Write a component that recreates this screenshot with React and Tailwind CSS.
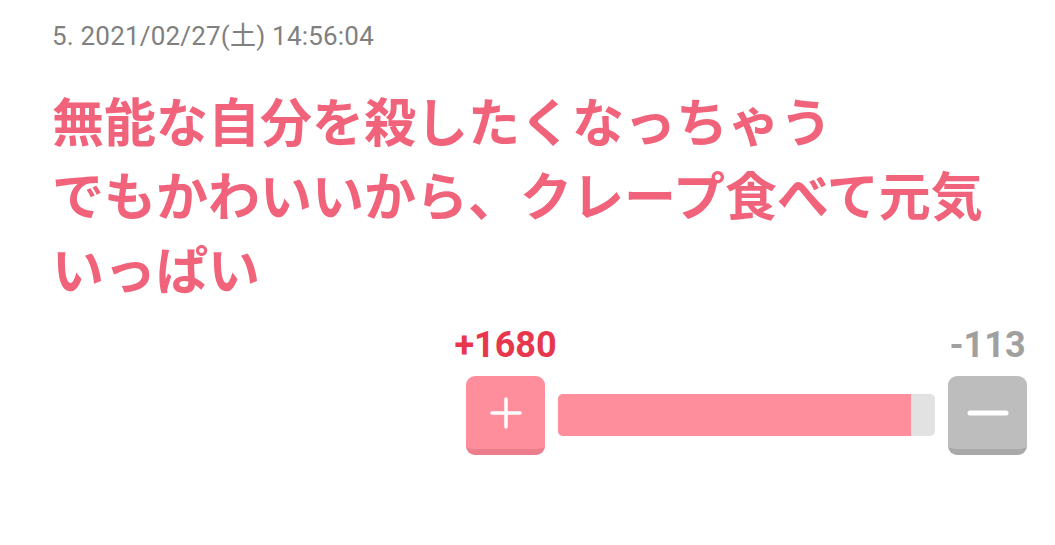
export default function App() {
  const plus = 1680
  const minus = 113
  const ratio = (plus / (plus + minus)) * 100

  return (
    <div className="w-[1055px] h-[545px] bg-white overflow-hidden">
      <div className="pt-[20px] pl-[52px] pr-[28px]">
        {/* meta line */}
        <p className="text-[26px] leading-[32px] tracking-[0.2px] text-[#808080]" style={{ fontFamily: 'Roboto, "Noto Sans CJK JP", sans-serif' }}>
          5. 2021/02/27(土) 14:56:04
        </p>

        {/* body */}
        <p
          className="mt-[31px] text-[52px] leading-[74px] font-bold text-[#f0637a]"
          style={{ fontFamily: '"Noto Sans CJK JP", sans-serif' }}
        >
          無能な自分を殺したくなっちゃう
          <br />
          でもかわいいから、クレープ食べて元気
          <br />
          いっぱい
        </p>

        {/* votes */}
        <div className="mt-[20px] flex justify-end gap-[13px]" style={{ fontFamily: 'Roboto, sans-serif' }}>
          <div className="w-[79px] flex flex-col items-center">
            <span className="text-[36px] leading-[40px] font-bold text-[#e8364c] whitespace-nowrap">+{plus}</span>
            <button className="mt-[11px] w-[79px] h-[79px] rounded-[9px] bg-[#ff8e9c] border-b-[6px] border-[#ec7d8c] flex items-center justify-center">
              <svg width="38" height="38" viewBox="0 0 38 38">
                <path d="M19 5v28M5 19h28" stroke="#fff" strokeWidth="3.5" strokeLinecap="round" />
              </svg>
            </button>
          </div>

          <div className="w-[377px] self-end mb-[19px] h-[42px] rounded-[5px] bg-[#e2e2e2] overflow-hidden">
            <div className="h-full bg-[#ff8e9c]" style={{ width: `${ratio}%` }} />
          </div>

          <div className="w-[79px] flex flex-col items-center">
            <span className="text-[36px] leading-[40px] font-bold text-[#a0a0a0] whitespace-nowrap">-{minus}</span>
            <button className="mt-[11px] w-[79px] h-[79px] rounded-[9px] bg-[#bdbdbd] border-b-[6px] border-[#a9a9a9] flex items-center justify-center">
              <svg width="44" height="10" viewBox="0 0 44 10">
                <path d="M4 5h36" stroke="#fff" strokeWidth="5" strokeLinecap="round" />
              </svg>
            </button>
          </div>
        </div>
      </div>
    </div>
  )
}
